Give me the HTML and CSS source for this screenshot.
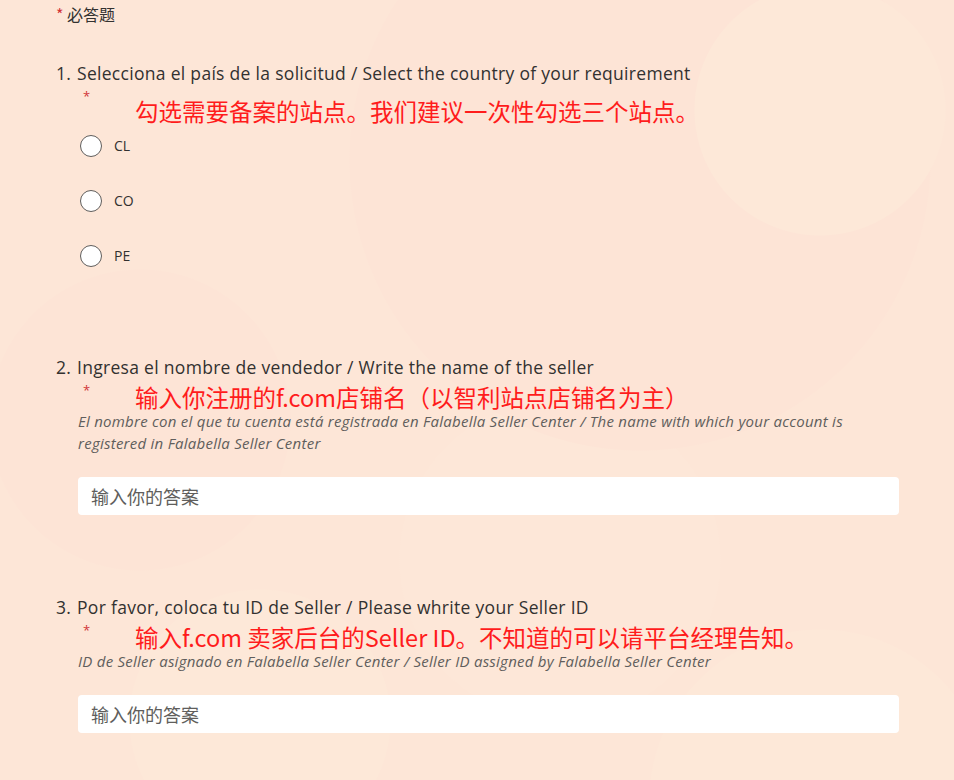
FILE: index.html
```html
<!DOCTYPE html>
<html lang="zh-Hans">
<head>
	<meta charset="UTF-8">
	<meta name="viewport" content="width=device-width, initial-scale=1.0">
	<title>表单</title>
	<link rel="stylesheet" href="styles.css">
</head>
<body>
	<div class="form">
		<div class="required-note"><span class="note-star">*</span> 必答题</div>

		<div class="question question-first">
			<div class="q-title"><span class="q-num">1.</span><span class="q-text">Selecciona el país de la solicitud / Select the country of your requirement</span></div>
			<div class="q-body">
				<div class="q-mark"><span class="star">*</span><span class="hint hint-first">勾选需要备案的站点。我们建议一次性勾选三个站点。</span></div>
				<div class="options">
					<label class="option"><span class="radio"></span><span class="option-label">CL</span></label>
					<label class="option"><span class="radio"></span><span class="option-label">CO</span></label>
					<label class="option"><span class="radio"></span><span class="option-label">PE</span></label>
				</div>
			</div>
		</div>

		<div class="question question-second">
			<div class="q-title"><span class="q-num">2.</span><span class="q-text">Ingresa el nombre de vendedor / Write the name of the seller</span></div>
			<div class="q-body">
				<div class="q-mark"><span class="star">*</span><span class="hint">输入你注册的f.com店铺名（以智利站点店铺名为主）</span></div>
				<div class="desc">El nombre con el que tu cuenta está registrada en Falabella Seller Center / The name with which your account is registered in Falabella Seller Center</div>
				<div class="answer">输入你的答案</div>
			</div>
		</div>

		<div class="question question-third">
			<div class="q-title"><span class="q-num">3.</span><span class="q-text">Por favor, coloca tu ID de Seller / Please whrite your Seller ID</span></div>
			<div class="q-body">
				<div class="q-mark"><span class="star">*</span><span class="hint">输入f.com 卖家后台的Seller ID。不知道的可以请平台经理告知。</span></div>
				<div class="desc">ID de Seller asignado en Falabella Seller Center / Seller ID assigned by Falabella Seller Center</div>
				<div class="answer">输入你的答案</div>
			</div>
		</div>
	</div>
</body>
</html>
```

FILE: styles.css
```css
html, body {
	margin: 0;
	padding: 0;
}

body {
	min-height: 780px;
	font-family: "Open Sans", "Noto Sans CJK SC", sans-serif;
	color: #323130;
	background-color: #fde6d7;
	background-image:
		radial-gradient(circle at 820px 110px, #fde8d8 0 125px, transparent 126px),
		radial-gradient(circle at 640px 160px, #fde4d6 0 290px, transparent 291px),
		radial-gradient(circle at 140px 420px, #fde4d6 0 150px, transparent 151px),
		radial-gradient(circle at 560px 560px, #fde7d8 0 160px, transparent 161px),
		radial-gradient(circle at 260px 720px, #fde8d8 0 130px, transparent 131px),
		radial-gradient(circle at 820px 800px, #fde8d8 0 170px, transparent 171px);
}

.form {
	padding: 4px 55px 40px 56px;
}

.required-note {
	font-size: 16px;
	line-height: 20px;
	font-family: "Noto Sans CJK SC", sans-serif;
}
.note-star {
	color: #d13438;
}

.question-first {
	margin-top: 37px;
}
.question-second {
	margin-top: 88px;
}
.question-third {
	margin-top: 80px;
}

.q-title {
	display: flex;
	font-size: 17.5px;
	line-height: 24px;
	letter-spacing: 0.3px;
}
.q-num {
	width: 21px;
	flex: none;
}

.q-body {
	padding-left: 21px;
}

.q-mark {
	display: flex;
	margin-top: 3px;
}
.star {
	width: 58px;
	flex: none;
	padding-left: 6px;
	box-sizing: border-box;
	font-size: 13px;
	line-height: 16px;
	color: #d13438;
}
.hint {
	padding-top: 2px;
	font-family: "Noto Sans CJK SC", sans-serif;
	font-size: 23.5px;
	line-height: 26px;
	color: #ff1c1c;
}
.hint-first {
	padding-top: 10px;
}

.options {
	display: flex;
	flex-direction: column;
	gap: 33px;
	margin-top: 11px;
}
.option {
	display: flex;
	align-items: center;
	gap: 12px;
	padding-left: 3px;
}
.radio {
	width: 20px;
	height: 20px;
	border: 1px solid #605e5c;
	border-radius: 50%;
	background: #fff;
}
.option-label {
	font-size: 14px;
	line-height: 22px;
}

.desc {
	padding-left: 1px;
	font-size: 15px;
	line-height: 22px;
	letter-spacing: 0.25px;
	font-style: italic;
	color: #605e5c;
}

.answer {
	margin: 23px 0 0 1px;
	height: 38px;
	padding: 0 13px;
	display: flex;
	align-items: center;
	background: #fff;
	border-radius: 4px;
	font-family: "Noto Sans CJK SC", sans-serif;
	font-size: 18px;
	color: #605e5c;
}
```
